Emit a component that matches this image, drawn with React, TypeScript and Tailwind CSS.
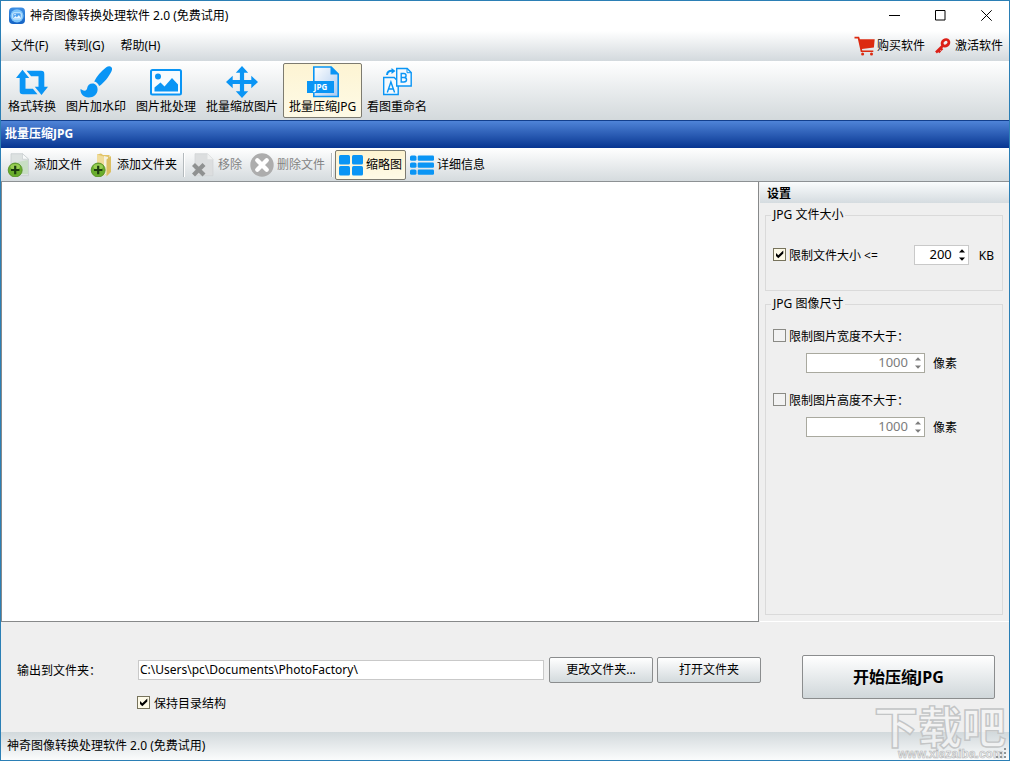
import { useState, type ReactNode } from "react";

const BLUE = "#0a95f5";

function LogoIcon() {
  return (
    <svg width="18" height="18" viewBox="0 0 18 18">
      <defs>
        <linearGradient id="logo" x1="0" y1="0" x2="0" y2="1">
          <stop offset="0" stopColor="#3d8fe4" />
          <stop offset="1" stopColor="#1462c4" />
        </linearGradient>
      </defs>
      <rect x="1" y="0.5" width="16" height="16.5" rx="4" fill="url(#logo)" />
      <circle cx="9" cy="8.8" r="6.6" fill="#7cc4fa" />
      <rect x="4.8" y="5.800" width="8.400" height="6.200" rx="1.2" fill="#4a9ff0" stroke="#d5efff" />
      <path d="M5 11.5l2.4-2.6 1.5 1.4 2-2.4 2.2 3.6z" fill="#e6f6ff" />
      <circle cx="7" cy="7.600" r="0.8" fill="#e6f6ff" />
    </svg>
  );
}

function ConvertIcon() {
  return (
    <svg width="32" height="32" viewBox="0 0 32 32" fill={BLUE}>
      <path d="M6.500 3.800L0 12h3.700v13c0 2.300.8 3.200 3.200 3.200h14.600l-4.600-5.400H9.500V12h3.700z" />
      <path d="M25.500 29l6.500-8.200h-3.700V8c0-2.300-.8-3.200-3.200-3.200H10.500l4.600 5.400h7.400v10.600h-3.700z" />
    </svg>
  );
}

function BrushIcon() {
  return (
    <svg width="32" height="32" viewBox="0 0 32 32" fill={BLUE}>
      <path d="M31.400 1.200c-1.200-1.300-3.300-1.200-5.100.1C21 5.400 16.500 10.700 14.200 15.400c2.400.5 4.300 2.300 4.900 4.700 4.800-3.100 9.700-9.400 12.300-14.700.8-1.600.9-3.200 0-4.200z" />
      <path d="M12.600 17.600c-3.200 0-5 2.100-5.400 4.500-.2 1.500-1 2.600-2.600 2.600-1.900 0-2.700-1.200-4.100-1.700C.1 27.500 3.500 31.400 8.600 31.400c5.300 0 8.900-3.500 9-8 0-3.200-2.100-5.800-5-5.800z" />
    </svg>
  );
}

function PictureIcon() {
  return (
    <svg width="32" height="32" viewBox="0 0 32 32">
      <rect x="1" y="4" width="30" height="24.500" rx="1.500" fill="#f7fbfe" stroke={BLUE} strokeWidth="2" />
      <circle cx="8" cy="10.500" r="3" fill={BLUE} />
      <path d="M4.500 25.500v-4l6-5 4 4 7.500-8.500 6 6.500v7z" fill={BLUE} />
    </svg>
  );
}

function ResizeIcon() {
  return (
    <svg width="32" height="32" viewBox="0 0 32 32" fill={BLUE}>
      <path d="M16 0l6.200 6.700h-4.100v7.200h7.200V9.800L32 16l-6.700 6.200v-4.100h-7.200v7.200h4.100L16 32l-6.200-6.700h4.100v-7.200H6.700v4.100L0 16l6.700-6.200v4.100h7.200V6.700H9.800z" />
    </svg>
  );
}

function JpgIcon() {
  return (
    <svg width="32" height="32" viewBox="0 0 32 32">
      <defs>
        <linearGradient id="page" x1="0" y1="0" x2="1" y2="1">
          <stop offset="0" stopColor="#ffffff" />
          <stop offset="1" stopColor="#a9c9ef" />
        </linearGradient>
      </defs>
      <path d="M6.800 1h17.400l7 7v22.500H6.800z" fill="url(#page)" stroke={BLUE} strokeWidth="1.600" />
      <path d="M23.500 0.500l8 8h-8z" fill={BLUE} />
      <rect x="0" y="15" width="27" height="12" fill={BLUE} />
      <text x="13.500" y="24" textAnchor="middle" fontSize="8" fontWeight="700" fill="#fff" fontFamily="Open Sans, sans-serif">
        JPG
      </text>
    </svg>
  );
}

function RenameIcon() {
  return (
    <svg width="32" height="32" viewBox="0 0 32 32" fill="none" stroke={BLUE}>
      <path d="M2.700 11.500h10.500l4 4v13H2.700z" fill="#f5fafe" strokeWidth="1.400" />
      <path d="M15.700 2.500h10.500l4 4v13.500H15.700z" fill="#f5fafe" strokeWidth="1.400" />
      <path d="M26 2.500v4.200h4.200" />
      <path d="M6 9c.3-3 2.200-4.300 5.200-4.200" strokeWidth="2" />
      <path d="M10.500 2l4 3-4 3z" fill={BLUE} stroke="none" />
      <path d="M6.300 26.500l3.600-10.500 3.700 10.500M7.500 23h5" strokeWidth="1.400" />
      <path d="M20.200 7.500v8.500h2.700c3.500 0 3.500-4.300.2-4.500 2.700-.2 2.600-4-.2-4zM20.200 11.500h3" strokeWidth="1.400" />
    </svg>
  );
}

function CartIcon() {
  return (
    <svg width="22" height="20" viewBox="0 0 22 20" fill="#dc2a10">
      <path d="M0.500 0.800h4.600l.8 2.400h14.800l-.8 8.300-12 1.500.4 1.400h11v1.500H6.800L3.800 2.500H0.500z" />
      <circle cx="8.600" cy="18" r="1.500" />
      <circle cx="17.500" cy="18" r="1.500" />
    </svg>
  );
}

function KeyIcon() {
  return (
    <svg width="16" height="16" viewBox="0 0 16 16" fill="none" stroke="#dc2018">
      <ellipse cx="10.500" cy="4.800" rx="3.600" ry="3" strokeWidth="2.800" transform="rotate(-35 10.500 4.800)" />
      <path d="M8.300 7.300L1 14.500M3.200 12l2 2.300M5.300 10l2 2.200" strokeWidth="2.600" />
    </svg>
  );
}

function PlusBadge() {
  return (
    <g>
      <circle cx="8.200" cy="17" r="7" fill="#69ad2c" stroke="#4f8b20" strokeWidth="0.800" />
      <ellipse cx="8.200" cy="13.700" rx="4.800" ry="2.800" fill="#a5d65f" opacity="0.800" />
      <path d="M8.200 12.800v8.400M4 17h8.400" stroke="#1d3d10" strokeWidth="2.200" />
    </g>
  );
}

function AddFileIcon() {
  return (
    <svg width="24" height="24" viewBox="0 0 24 24">
      <path d="M4 0.700h11.500l6 5.500v16.500H4z" fill="#dde2e1" stroke="#c3cacb" strokeWidth="0.700" />
      <path d="M11 9l10-2v14H13z" fill="#c8dec4" />
      <path d="M15.500 0.700v5.500h6z" fill="#f8fafa" stroke="#c3cacb" strokeWidth="0.600" />
      <PlusBadge />
    </svg>
  );
}

function AddFolderIcon() {
  return (
    <svg width="24" height="24" viewBox="0 0 24 24">
      <path d="M7 1.500l4-1 2 1.500h6.500V19L14 22.500 7 20z" fill="#e2c468" />
      <path d="M14 3l4 1v16l-4 2z" fill="#f5f1df" />
      <path d="M16.500 6.500L21 3v16l-4.500 4.500z" fill="#dcbf62" />
      <path d="M7 1.500l7 2v19l-7-3z" fill="#f0dc9a" />
      <PlusBadge />
    </svg>
  );
}

function RemoveIcon() {
  return (
    <svg width="24" height="24" viewBox="0 0 24 24">
      <path d="M4 0.700h12.500l5.500 5.500v16.500H4z" fill="#dcdedf" stroke="#d0d3d4" strokeWidth="0.700" />
      <path d="M16.500 0.700v5.500H22z" fill="#f0f1f1" />
      <path d="M2.500 11.500l10.500 10.500M13 11.500L2.500 22" stroke="#8f9191" strokeWidth="4.200" />
    </svg>
  );
}

function DeleteIcon() {
  return (
    <svg width="24" height="24" viewBox="0 0 24 24">
      <circle cx="12" cy="12" r="11.700" fill="#adadad" />
      <path d="M7.300 7.300l9.400 9.400M16.700 7.300l-9.400 9.400" stroke="#fff" strokeWidth="4.400" strokeLinecap="round" />
    </svg>
  );
}

function GridIcon() {
  return (
    <svg width="24" height="24" viewBox="0 0 24 24" fill={BLUE}>
      <rect x="0" y="2" width="11" height="9.500" rx="1.500" />
      <rect x="13" y="2" width="11" height="9.500" rx="1.500" />
      <rect x="0" y="13" width="11" height="9.500" rx="1.500" />
      <rect x="13" y="13" width="11" height="9.500" rx="1.500" />
    </svg>
  );
}

function ListIcon() {
  return (
    <svg width="24" height="24" viewBox="0 0 24 24" fill={BLUE}>
      {[2.5, 9.5, 16.5].map((y) => (
        <g key={y}>
          <rect x="0" y={y} width="6.500" height="5.300" rx="1.600" />
          <rect x="7.700" y={y} width="16.300" height="5.300" rx="1.200" />
        </g>
      ))}
    </svg>
  );
}

function MainTool({ icon, label, active }: { icon: ReactNode; label: string; active?: boolean }) {
  return (
    <button
      className={
        "flex h-[55px] flex-col items-center rounded-xs border px-1 pt-0.5 whitespace-nowrap " +
        (active ? "min-w-[79px] border-[#7d7b70] bg-linear-to-b from-[#fdf4d3] to-[#fefae6]" : "border-transparent")
      }
    >
      {icon}
      <span className="leading-[18px]">{label}</span>
    </button>
  );
}

function SmallTool({ icon, label, active, disabled }: { icon: ReactNode; label: string; active?: boolean; disabled?: boolean }) {
  return (
    <button
      disabled={disabled}
      className={
        "flex h-[30px] items-center gap-[3px] rounded-xs border px-[3px] whitespace-nowrap disabled:text-[#838383] " +
        (active ? "border-[#7d7b70] bg-linear-to-b from-[#fdf3d0] to-[#fefae6]" : "border-transparent")
      }
    >
      {icon}
      {label}
    </button>
  );
}

function Separator() {
  return <div className="mx-0.5 h-6 w-0.5 border-r border-white bg-[#b4babd]" />;
}

function Check({ checked, onChange, label, gap }: { checked: boolean; onChange: (v: boolean) => void; label: string; gap?: boolean }) {
  return (
    <label className={"flex h-[18px] items-center whitespace-nowrap " + (gap ? "gap-1" : "gap-[3px]")}>
      <span className="mb-0.5 grid">
        <input
          type="checkbox"
          checked={checked}
          onChange={(e) => onChange(e.target.checked)}
          className="peer col-start-1 row-start-1 size-[13px] appearance-none border border-[#8a8a85] bg-[#f2f2f2] checked:border-[#77735c] checked:bg-[#fdfae8]"
        />
        <svg className="pointer-events-none invisible col-start-1 row-start-1 peer-checked:visible" width="13" height="13" viewBox="0 0 13 13">
          <path d="M3 5v3l2.300 2.300L10.300 5.500v-3L5.300 7.300z" fill="#000" />
        </svg>
      </span>
      <span className="pt-0.5">{label}</span>
    </label>
  );
}

function Spinner({ value, label, disabled, onChange, width }: { value: number; label: string; disabled?: boolean; onChange: (v: number) => void; width: string }) {
  return (
    <div className={"flex h-5 items-center border bg-white " + width + (disabled ? " border-[#a9a99f] text-[#7c7c7c]" : " border-[#c9c9c9]")}>
      <input
        type="text"
        aria-label={label}
        value={value}
        disabled={disabled}
        onChange={(e) => onChange(Number(e.target.value) || 0)}
        className="h-full min-w-0 flex-1 bg-transparent pr-1 pb-0.5 text-right text-[13px] outline-none"
      />
      <div className="flex w-3 flex-col items-center gap-1">
        <button aria-label={label + " +"} disabled={disabled} onClick={() => onChange(value + 1)}>
          <svg className="block" width="6" height="4" viewBox="0 0 6 4" fill="currentColor"><path d="M0 3.500L3 0.300 6 3.500z" /></svg>
        </button>
        <button aria-label={label + " -"} disabled={disabled} onClick={() => onChange(value - 1)}>
          <svg className="block" width="6" height="4" viewBox="0 0 6 4" fill="currentColor"><path d="M0 0.500L3 3.700 6 0.500z" /></svg>
        </button>
      </div>
    </div>
  );
}

export default function App() {
  const [limitSize, setLimitSize] = useState(true);
  const [limitWidth, setLimitWidth] = useState(false);
  const [limitHeight, setLimitHeight] = useState(false);
  const [keepTree, setKeepTree] = useState(true);
  const [size, setSize] = useState(200);
  const [maxWidth, setMaxWidth] = useState(1000);
  const [maxHeight, setMaxHeight] = useState(1000);
  const [folder, setFolder] = useState("C:\\Users\\pc\\Documents\\PhotoFactory\\");

  return (
    <div className="relative flex min-h-screen flex-col border border-[#2b7fb5] bg-[#efefef] font-['Noto_Sans','Noto_Sans_CJK_SC',sans-serif] text-[12px] leading-[18px] text-black">
      <header className="bg-linear-to-b from-white from-50% to-[#d3d9dd]">
        <div className="flex h-[29px] items-center">
          <div className="flex flex-1 items-center gap-1 pl-[7px]">
            <LogoIcon />
            <h1>神奇图像转换处理软件 2.0 (免费试用)</h1>
          </div>
          <button aria-label="最小化" className="flex h-full w-[46px] items-center justify-center">
            <svg width="11" height="11" viewBox="0 0 11 11" stroke="#000"><path d="M0 5.500h11" /></svg>
          </button>
          <button aria-label="最大化" className="flex h-full w-[46px] items-center justify-center">
            <svg width="11" height="11" viewBox="0 0 11 11" stroke="#000" fill="none"><path d="M0.500 0.500h9.500v9.500h-9.500z" /></svg>
          </button>
          <button aria-label="关闭" className="flex h-full w-[46px] items-center justify-center">
            <svg width="11" height="11" viewBox="0 0 11 11" stroke="#000"><path d="M0.300 0.300l10.400 10.400M10.700 0.300L0.300 10.700" /></svg>
          </button>
        </div>
        <nav className="flex h-[31px] items-center pr-1.5 pl-0.5">
          <button className="px-2">文件(F)</button>
          <button className="px-2">转到(G)</button>
          <button className="px-2">帮助(H)</button>
          <div className="ml-auto flex items-center gap-2.5">
            <a href="#buy" className="flex items-center gap-px"><CartIcon />购买软件</a>
            <a href="#activate" className="flex items-center gap-1"><KeyIcon />激活软件</a>
          </div>
        </nav>
      </header>

      <div className="flex h-[59px] items-center bg-linear-to-b from-white to-[#d3d9dc] pl-0.5">
        <MainTool icon={<ConvertIcon />} label="格式转换" />
        <MainTool icon={<BrushIcon />} label="图片加水印" />
        <MainTool icon={<PictureIcon />} label="图片批处理" />
        <MainTool icon={<ResizeIcon />} label="批量缩放图片" />
        <MainTool icon={<JpgIcon />} label="批量压缩JPG" active />
        <MainTool icon={<RenameIcon />} label="看图重命名" />
      </div>

      <div className="flex h-7 items-center border-t border-[#123f8d] bg-linear-to-b from-[#4f84d8] to-[#073591] pb-0.5 pl-1">
        <h2 className="font-bold text-white">批量压缩JPG</h2>
      </div>

      <div className="flex h-[34px] items-center border-b border-[#8d9194] bg-linear-to-b from-white to-[#d5dbde] pl-0.5">
        <SmallTool icon={<AddFileIcon />} label="添加文件" />
        <SmallTool icon={<AddFolderIcon />} label="添加文件夹" />
        <Separator />
        <SmallTool icon={<RemoveIcon />} label="移除" disabled />
        <SmallTool icon={<DeleteIcon />} label="删除文件" disabled />
        <Separator />
        <SmallTool icon={<GridIcon />} label="缩略图" active />
        <SmallTool icon={<ListIcon />} label="详细信息" />
      </div>

      <main className="flex flex-1 gap-px">
        <section aria-label="缩略图" className="flex-1 border border-t-0 border-[#87898a] bg-white" />
        <aside className="flex w-[249px] flex-col border-b border-white pb-1.5">
          <h2 className="h-[21px] bg-linear-to-b from-[#fafcfd] to-[#d5dce0] pl-[7px] leading-6 font-bold">设置</h2>
          <fieldset className="mt-[3px] mr-1.5 ml-[5px] h-[85px] border border-[#dadada] pt-[21px] pl-[7px]">
            <legend className="-ml-0.5 px-0.5">JPG 文件大小</legend>
            <div className="flex h-5 items-center">
              <Check checked={limitSize} onChange={setLimitSize} label="限制文件大小 <=" />
              <div className="mr-2 ml-auto flex items-center gap-2.5">
                <Spinner width="w-[55px]" label="文件大小" value={size} onChange={setSize} disabled={!limitSize} />
                <span className="pt-0.5">KB</span>
              </div>
            </div>
          </fieldset>
          <fieldset className="mt-1 mr-1.5 ml-[5px] flex-1 border border-[#dadada] pt-3.5 pl-[7px]">
            <legend className="-ml-0.5 px-0.5">JPG 图像尺寸</legend>
            <Check checked={limitWidth} onChange={setLimitWidth} label="限制图片宽度不大于：" />
            <div className="mt-2 ml-[33px] flex h-5 items-center gap-2">
              <Spinner width="w-[119px]" label="图片宽度" value={maxWidth} onChange={setMaxWidth} disabled={!limitWidth} />
              <span className="pt-0.5">像素</span>
            </div>
            <div className="mt-[18px]">
              <Check checked={limitHeight} onChange={setLimitHeight} label="限制图片高度不大于：" />
            </div>
            <div className="mt-2 ml-[33px] flex h-5 items-center gap-2">
              <Spinner width="w-[119px]" label="图片高度" value={maxHeight} onChange={setMaxHeight} disabled={!limitHeight} />
              <span className="pt-0.5">像素</span>
            </div>
          </fieldset>
        </aside>
      </main>

      <section className="flex h-[110px] items-start gap-[41px] pt-[33px] pr-3.5 pl-4">
        <div className="flex-1 pt-0.5">
          <div className="flex items-center">
            <label htmlFor="folder" className="w-[121px] pt-0.5 whitespace-nowrap">输出到文件夹：</label>
            <input
              id="folder"
              type="text"
              value={folder}
              onChange={(e) => setFolder(e.target.value)}
              className="mr-[5px] h-5 min-w-0 flex-1 border border-[#c9c9c9] bg-white px-px pb-0.5 outline-none"
            />
            <button className="mr-1 h-[26px] w-[104px] rounded-xs border border-[#8b8d8e] bg-linear-to-b from-white to-[#d3dadd]">更改文件夹...</button>
            <button className="h-[26px] w-[104px] rounded-xs border border-[#8b8d8e] bg-linear-to-b from-white to-[#d3dadd]">打开文件夹</button>
          </div>
          <div className="mt-[11px] ml-[120px] flex">
            <Check gap checked={keepTree} onChange={setKeepTree} label="保持目录结构" />
          </div>
        </div>
        <button className="h-11 w-[193px] rounded-xs border border-[#8b8d8e] bg-linear-to-b from-white to-[#d0d7da] text-base font-bold">开始压缩JPG</button>
      </section>

      <footer className="flex h-7 items-center bg-linear-to-b from-[#d2d9dc] to-[#fbfcfc] pl-1.5">
        神奇图像转换处理软件 2.0 (免费试用)
      </footer>

      <svg
        className="pointer-events-none absolute right-0 bottom-0"
        width="136"
        height="64"
        viewBox="0 0 136 64"
        fontFamily="Noto Sans CJK SC, sans-serif"
      >
        <text x="1" y="48" fontSize="44" fontWeight="700" fill="#f6f6f6" fillOpacity="0.700" stroke="#c3c5c6" strokeWidth="1.400">
          下载吧
        </text>
        <text x="25" y="62" fontSize="12" fontWeight="700" fontFamily="Liberation Sans, sans-serif" fill="#f4f4f4" stroke="#b4b6b7" strokeWidth="0.600">
          www.xiazaiba.com
        </text>
        <g fill="#8f9496">
          <rect x="131" y="52" width="2" height="2" />
          <rect x="127" y="56" width="2" height="2" />
          <rect x="131" y="56" width="2" height="2" />
          <rect x="123" y="60" width="2" height="2" />
          <rect x="127" y="60" width="2" height="2" />
          <rect x="131" y="60" width="2" height="2" />
        </g>
      </svg>
    </div>
  );
}
